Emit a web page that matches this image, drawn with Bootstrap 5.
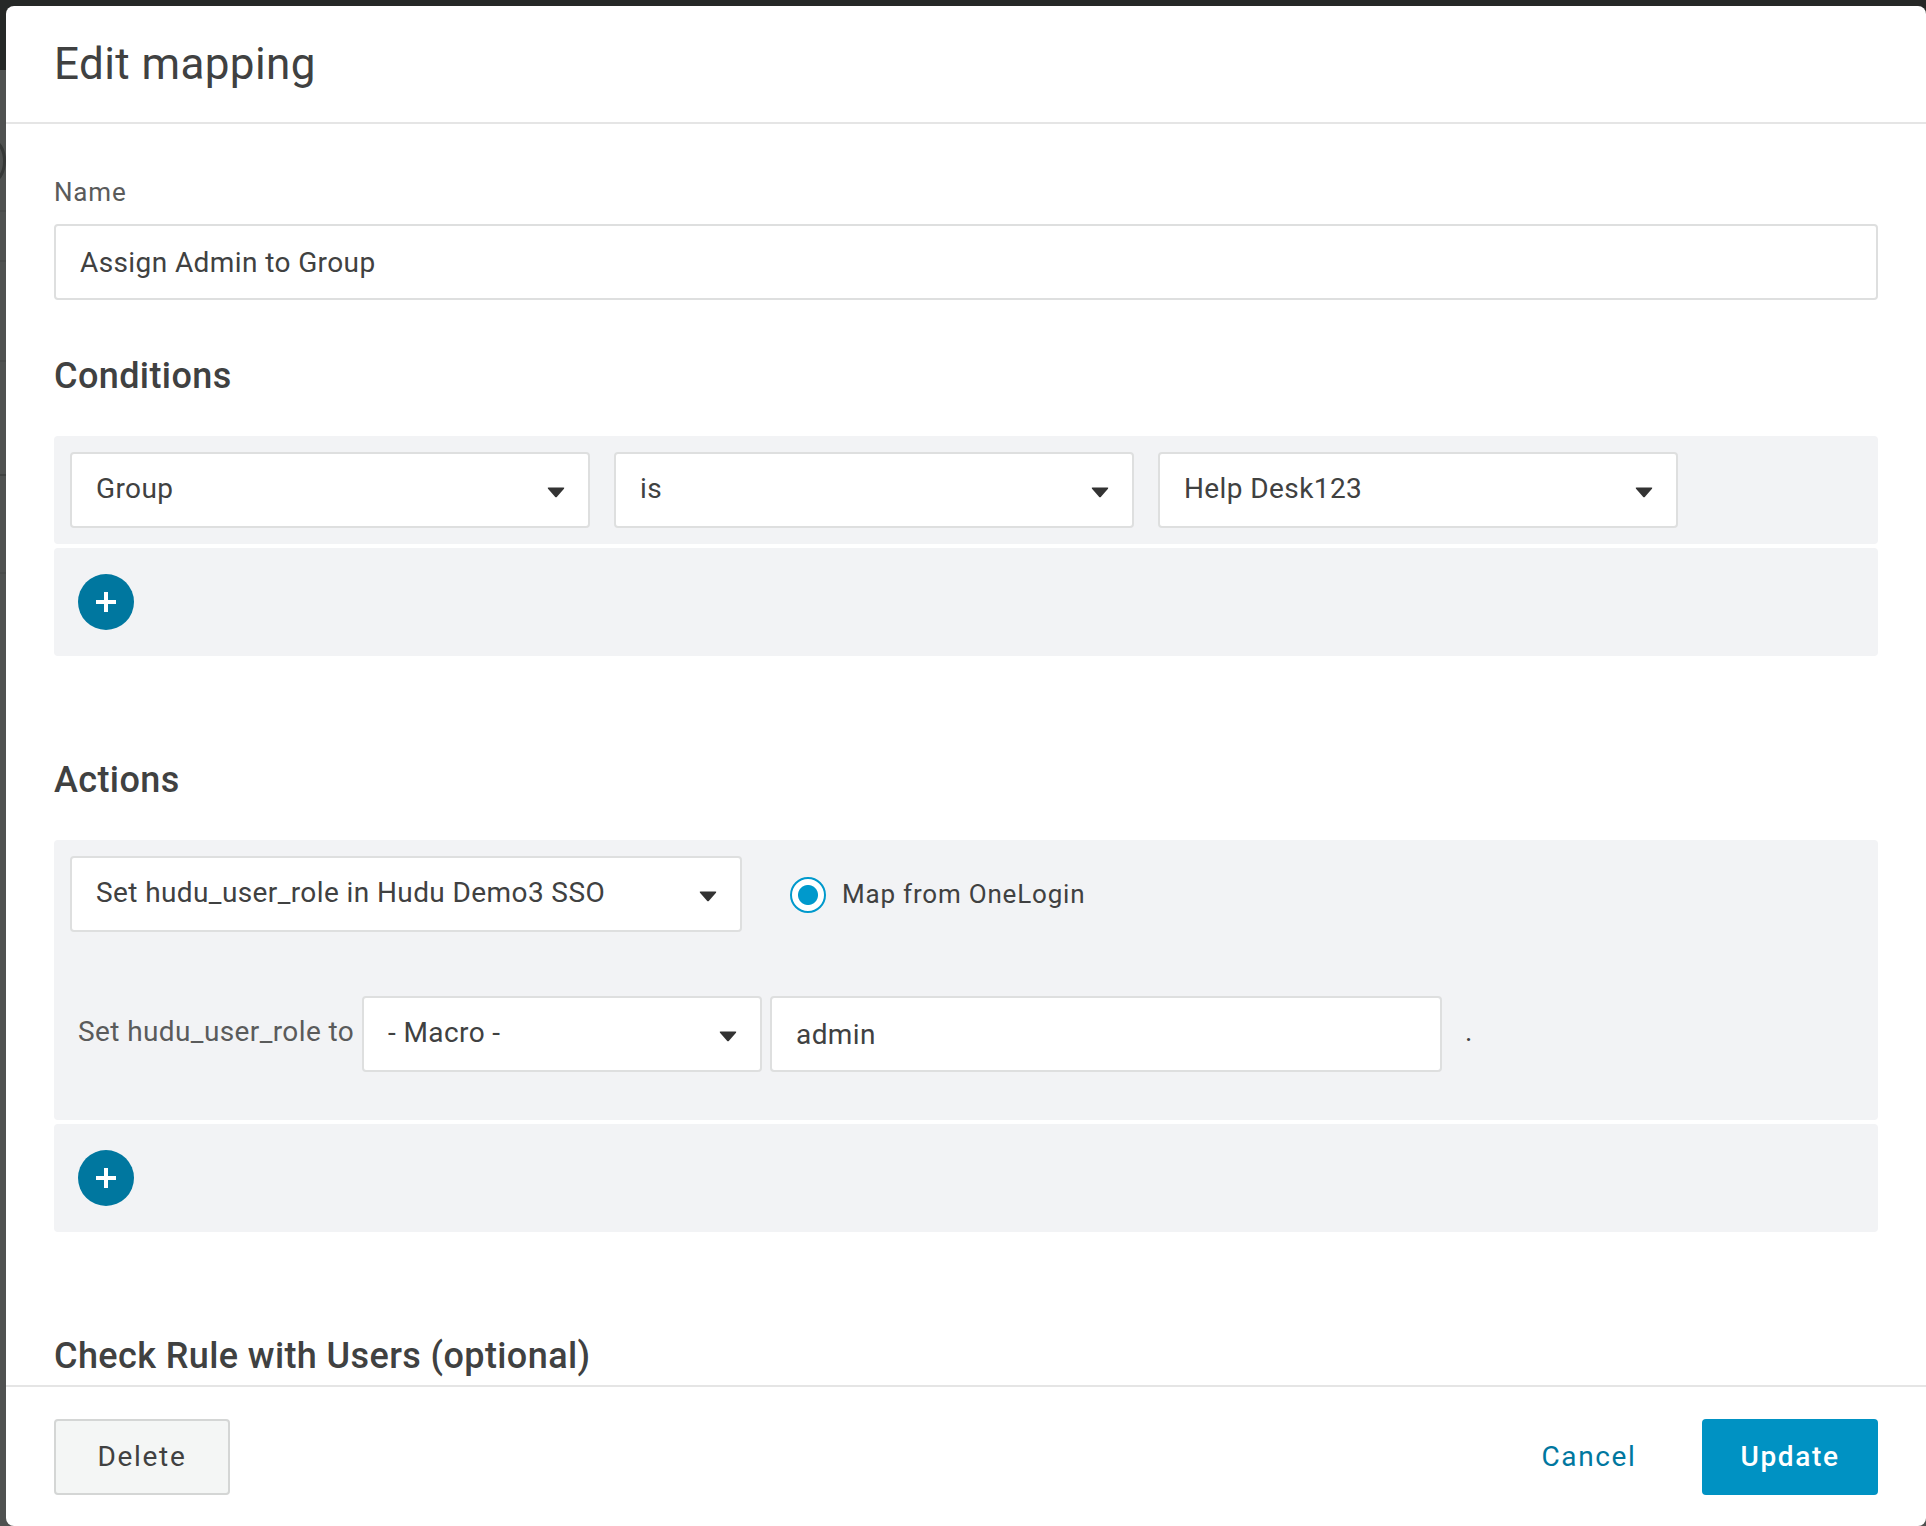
<!DOCTYPE html>
<html lang="en">
<head>
  <meta charset="UTF-8">
  <meta name="viewport" content="width=device-width, initial-scale=1.0">
  <title>Edit mapping</title>
  <link href="https://cdn.jsdelivr.net/npm/bootstrap@5.3.3/dist/css/bootstrap.min.css" rel="stylesheet">
  <style>
    body {
      font-family: Roboto, "Liberation Sans", sans-serif;
      font-size: 28px;
      line-height: 36px;
      letter-spacing: .4px;
      color: #404141;
      background: linear-gradient(#262827 70px, #4f5150 70px);
      height: 1526px;
      overflow: hidden;
      padding: 6px 0 0 6px;
    }

    /* page behind the dialog */
    .backdrop-page { left: 0; top: 0; z-index: -1; }

    .dialog { width: 1920px; height: 1520px; border-radius: 8px; overflow: hidden; }
    .dialog-head { height: 118px; padding: 0 48px; border-bottom: 2px solid #e5e5e5; }
    .dialog-head h1 { font-size: 44px; line-height: 52px; font-weight: 400; }
    .dialog-main { height: 1261px; padding: 50px 48px 0; overflow: hidden; }
    .dialog-foot { height: 141px; padding: 32px 48px 0; border-top: 2px solid #e5e5e5; }

    .field-label { font-size: 26px; letter-spacing: .8px; color: #5a5b5b; height: 36px; margin-bottom: 14px; }
    h2.section-title { font-size: 36px; line-height: 44px; font-weight: 500; }
    .after-name { margin-top: 54px; margin-bottom: 38px; }
    .after-panel { margin-top: 102px; margin-bottom: 38px; }

    .form-control, .form-select {
      height: 76px;
      border: 2px solid #dedfdf;
      border-radius: 4px;
      color: #404141;
      font-size: 28px;
      line-height: 36px;
      letter-spacing: .4px;
      padding: 0 24px;
    }
    .form-select {
      padding-bottom: 2px;
      background-image: url("data:image/svg+xml,%3csvg xmlns='http://www.w3.org/2000/svg' viewBox='0 0 18 11'%3e%3cpath fill='%23333' d='M1.6 .6h14.8q1.5 0 .6 1.2l-7 7.9q-1 1.1-2 0l-7-7.9q-.9-1.2.6-1.2z'/%3e%3c/svg%3e");
      background-size: 18px 11px;
      background-position: right 23px top 33px;
    }
    .w-cond { width: 520px; }
    .w-action { width: 672px; }
    .w-macro { width: 400px; }

    .panel { background: #f2f3f5; border-radius: 4px; padding: 16px; }
    .panel-add { height: 108px; padding: 26px 24px; margin-top: 4px; }
    .panel-actions { height: 280px; }
    .row-value { margin-top: 64px; padding-left: 8px; }
    .row-value .prefix { width: 284px; padding-bottom: 4px; color: #5a5b5b; }
    .row-value .suffix { padding-bottom: 4px; margin-left: 23px; }
    .gap-cond { gap: 24px; }

    .btn-add { width: 56px; height: 56px; background: #00779f; }
    .form-check-input.map-radio {
      width: 36px; height: 36px; margin: 2px 0 0; float: none;
      border: 2px solid #0099cc; background-color: #fff;
    }
    .form-check-input.map-radio:checked {
      background-color: #fff;
      background-image: radial-gradient(circle, #0099cc 9.5px, transparent 10.5px);
      background-size: auto; background-position: center;
      border-color: #0099cc;
    }
    .map-label { font-size: 26px; letter-spacing: .8px; margin-left: 16px; }

    .dialog-foot .btn { height: 76px; border-radius: 4px; font-size: 28px; line-height: 36px; letter-spacing: 1.65px; padding: 0; }
    .btn-delete { width: 176px; border: 2px solid #d4d6d5; background: #f4f6f5; color: #404141; }
    .btn-cancel { width: 116px; color: #00779f; border: 0; margin-right: 55px; }
    .btn-update { width: 176px; background: #0092c3; color: #fff; border: 0; font-weight: 500; }
  </style>
</head>
<body>
  <svg class="backdrop-page position-absolute" width="6" height="600" fill="none">
    <ellipse cx="-9" cy="161" rx="13.5" ry="21" stroke="#363837" stroke-width="3"/>
    <path stroke="#494b4a" stroke-width="2" d="M0 211h6M0 261h6M0 361h6M0 573h6"/>
    <path stroke="#404241" stroke-width="2" d="M0 475h6"/>
  </svg>

  <div class="dialog bg-white">
    <div class="dialog-head d-flex align-items-center">
      <h1 class="m-0">Edit mapping</h1>
    </div>

    <div class="dialog-main">
      <label class="field-label d-block" for="mappingName">Name</label>
      <input type="text" class="form-control" id="mappingName" value="Assign Admin to Group">

      <h2 class="section-title after-name">Conditions</h2>
      <div class="panel d-flex gap-cond">
        <select class="form-select w-cond"><option>Group</option></select>
        <select class="form-select w-cond"><option>is</option></select>
        <select class="form-select w-cond"><option>Help Desk123</option></select>
      </div>
      <div class="panel panel-add">
        <button type="button" class="btn-add rounded-circle border-0 p-0 d-flex align-items-center justify-content-center" aria-label="Add condition">
          <svg width="20" height="20" stroke="#fff" stroke-width="4"><path d="M10 0v20M0 10h20"/></svg>
        </button>
      </div>

      <h2 class="section-title after-panel">Actions</h2>
      <div class="panel panel-actions">
        <div class="d-flex align-items-center">
          <select class="form-select w-action"><option>Set hudu_user_role in Hudu Demo3 SSO</option></select>
          <div class="d-flex align-items-center ms-5">
            <input class="form-check-input map-radio" type="radio" name="mapFrom" id="mapFrom" checked>
            <label class="map-label" for="mapFrom">Map from OneLogin</label>
          </div>
        </div>
        <div class="row-value d-flex align-items-center">
          <span class="prefix text-nowrap">Set hudu_user_role to</span>
          <select class="form-select w-macro"><option>- Macro -</option></select>
          <input type="text" class="form-control w-action ms-2" value="admin" aria-label="Value">
          <span class="suffix">.</span>
        </div>
      </div>
      <div class="panel panel-add">
        <button type="button" class="btn-add rounded-circle border-0 p-0 d-flex align-items-center justify-content-center" aria-label="Add action">
          <svg width="20" height="20" stroke="#fff" stroke-width="4"><path d="M10 0v20M0 10h20"/></svg>
        </button>
      </div>

      <h2 class="section-title after-panel">Check Rule with Users (optional)</h2>
    </div>

    <div class="dialog-foot d-flex align-items-start">
      <button type="button" class="btn btn-delete me-auto">Delete</button>
      <button type="button" class="btn btn-cancel">Cancel</button>
      <button type="button" class="btn btn-update">Update</button>
    </div>
  </div>

  <script src="https://cdn.jsdelivr.net/npm/bootstrap@5.3.3/dist/js/bootstrap.bundle.min.js"></script>
</body>
</html>
